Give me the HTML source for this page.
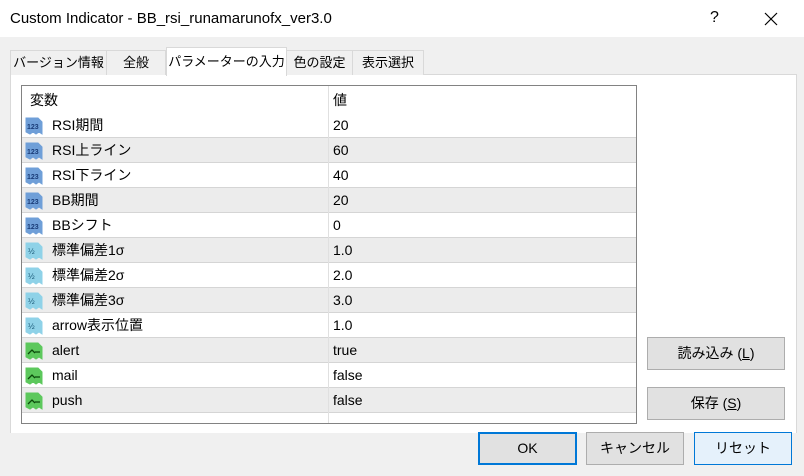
<!DOCTYPE html><html><head><meta charset="utf-8"><style>
body{margin:0;width:804px;height:476px;background:#f0f0f0;font-family:"Liberation Sans","Noto Sans CJK JP",sans-serif;font-size:14px;color:#000;position:relative;overflow:hidden}
.abs{position:absolute}
#title{left:0;top:0;width:804px;height:37px;background:#fff}
#title span{position:absolute;left:10px;top:10px;font-size:15px}
.tab{position:absolute;top:50px;height:24px;border:1px solid #d9d9d9;border-bottom:none;background:#f0f0f0;line-height:24px;text-align:center;font-size:13px;white-space:nowrap}
#panel{left:10px;top:74px;width:785px;height:358px;background:#fff;border:1px solid #d9d9d9;border-bottom:none}
#tbl{left:21px;top:85px;width:614px;height:337px;border:1px solid #828282;background:#fff}
.row{position:absolute;left:0;width:614px;height:24px;border-bottom:1px solid #d5d5d5;line-height:24px}
.row .n{position:absolute;left:30px}
.row .v{position:absolute;left:311px}
.g{background:#ececec}
.div{position:absolute;left:306px;top:0;width:1px;height:337px;background:#e0e0e0}
.btn{position:absolute;background:#e1e1e1;border:1px solid #adadad;text-align:center;font-size:14px}
.ic{position:absolute;left:3px;top:4px}
</style></head><body>
<div id="title" class="abs"><span>Custom Indicator - BB_rsi_runamarunofx_ver3.0</span>
<span style="left:710px;top:9px;font-size:16px">?</span>
<svg class="abs" style="left:764px;top:12px" width="14" height="14"><path d="M1 1L13 13M13 1L1 13" stroke="#000" stroke-width="1.2"/></svg></div>
<div id="panel" class="abs"></div>
<div class="tab" style="left:10px;width:95px">バージョン情報</div>
<div class="tab" style="left:106px;width:58px">全般</div>
<div class="tab" style="left:166px;top:47px;height:28px;width:119px;background:#fff;line-height:27px">パラメーターの入力</div>
<div class="tab" style="left:286px;width:65px">色の設定</div>
<div class="tab" style="left:352px;width:70px">表示選択</div>
<div id="tbl" class="abs">
<div class="row" style="top:0;height:26px;line-height:28px;border:none"><span class="n" style="left:8px">変数</span><span class="v">値</span></div>
<div id="rows"></div>
<div class="div"></div>
</div>
<script>
var d=[["a","RSI期間","20"],["a","RSI上ライン","60"],["a","RSI下ライン","40"],["a","BB期間","20"],["a","BBシフト","0"],["b","標準偏差1σ","1.0"],["b","標準偏差2σ","2.0"],["b","標準偏差3σ","3.0"],["b","arrow表示位置","1.0"],["c","alert","true"],["c","mail","false"],["c","push","false"]];
var h="";
d.forEach(function(r,i){
var col=r[0]=="a"?"#6f9fd8":r[0]=="b"?"#8fd2e8":"#5cc85c";
var lab=r[0]=="a"?'<text x="2" y="12" font-size="7" font-weight="bold" fill="#1a3c78" font-family="Liberation Sans">123</text>':r[0]=="b"?'<text x="3" y="12" font-size="8" fill="#1a5a78" font-family="Liberation Sans">½</text>':'<path d="M3 12L7 8L10 11M10 10H15" stroke="#0a4a0a" stroke-width="1.3" fill="none"/>';
h+='<div class="row'+(i%2?' g':'')+'" style="top:'+(27+i*25)+'px"><svg class="ic" width="18" height="18"><path d="M1 1H13L17 5V17L14 15L11 17L8 15L5 17L1 15Z" fill="'+col+'" stroke="'+col+'"/>'+lab+'</svg><span class="n">'+r[1]+'</span><span class="v">'+r[2]+'</span></div>';
});
document.getElementById("rows").innerHTML=h;
</script>
<div class="btn" style="left:647px;top:337px;width:136px;height:31px;line-height:31px">読み込み (<u>L</u>)</div>
<div class="btn" style="left:647px;top:387px;width:136px;height:31px;line-height:31px">保存 (<u>S</u>)</div>
<div class="btn" style="left:478px;top:432px;width:95px;height:29px;line-height:29px;border:2px solid #0078d7">OK</div>
<div class="btn" style="left:586px;top:432px;width:96px;height:31px;line-height:31px">キャンセル</div>
<div class="btn" style="left:694px;top:432px;width:96px;height:31px;line-height:31px;background:#e5f1fb;border-color:#0078d7">リセット</div>
</body></html>
